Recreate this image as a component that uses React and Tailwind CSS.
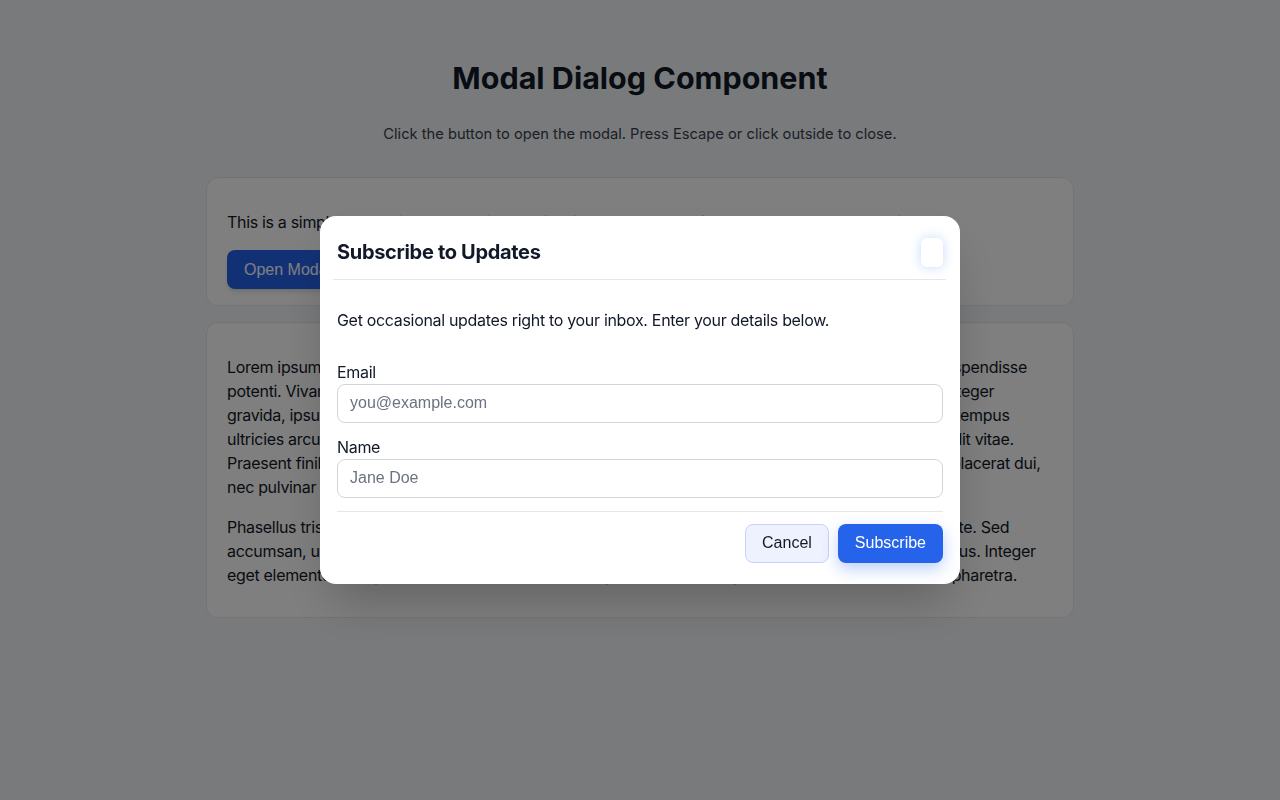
import { useState } from "react";

const font = { fontFamily: "Inter, 'Noto Sans', sans-serif" };
const controlFont = "font-['Liberation_Sans',Arial,sans-serif] tracking-normal";

function Card({ children, className = "" }) {
  return (
    <div className={`bg-white border border-gray-200 rounded-xl px-5 ${className}`}>
      {children}
    </div>
  );
}

function Field({ label, placeholder, type = "text" }) {
  return (
    <label className="block">
      <span className="block text-base leading-6 text-[#111827]">{label}</span>
      <input
        type={type}
        placeholder={placeholder}
        className={`block w-full h-[39px] rounded-lg border border-[#d4d4dc] px-3 text-base text-[#111827] placeholder:text-[#6b7280] focus:outline-none ${controlFont}`}
      />
    </label>
  );
}

function SubscribeModal({ onClose }) {
  return (
    <div className="fixed inset-0 bg-black/50 flex items-center justify-center">
      <div className="w-[640px] mb-px bg-white rounded-2xl shadow-2xl">
        {/* Header */}
        <div className="ml-[13px] mr-[14px] pl-1 pr-[3px] pt-[22px] pb-3 border-b border-gray-200 flex items-start justify-between">
          <h2 className="text-xl leading-7 font-bold text-[#111827]">Subscribe to Updates</h2>
          <button
            aria-label="Close"
            onClick={onClose}
            className="w-[22px] h-[29px] rounded-md bg-white shadow-[0_0_12px_rgba(59,130,246,0.3)]"
          />
        </div>

        {/* Body */}
        <div className="px-[17px] pt-7">
          <p className="text-base leading-6 text-[#111827]">
            Get occasional updates right to your inbox. Enter your details below.
          </p>
          <div className="mt-7 flex flex-col gap-3">
            <Field label="Email" type="email" placeholder="you@example.com" />
            <Field label="Name" placeholder="Jane Doe" />
          </div>
        </div>

        {/* Footer */}
        <div className="mx-[17px] mt-[13px] pt-3 pb-[21px] border-t border-gray-200 flex justify-end gap-[9px]">
          <button
            onClick={onClose}
            className={`h-[39px] px-4 rounded-lg bg-[#eef2ff] border border-[#c7d2fe] text-base text-[#111827] ${controlFont}`}
          >
            Cancel
          </button>
          <button className={`h-[39px] px-[17px] rounded-lg bg-[#2563eb] text-base text-white shadow-[0_6px_16px_rgba(37,99,235,0.3)] ${controlFont}`}>
            Subscribe
          </button>
        </div>
      </div>
    </div>
  );
}

export default function App() {
  const [open, setOpen] = useState(true);

  return (
    <div className="min-h-screen bg-[#f3f4f6] text-[#111827] tracking-[-0.02em]" style={font}>
      <div className="w-[868px] mx-auto pt-[60px]">
        <h1 className="text-[30.5px] leading-9 font-bold text-center tracking-normal text-[#111827]">Modal Dialog Component</h1>
        <p className="mt-7 text-[14.7px] leading-5 text-center tracking-normal text-[#374151]">
          Click the button to open the modal. Press Escape or click outside to close.
        </p>

        <div className="mt-[33px] flex flex-col gap-4">
          <Card className="pt-8 pb-4">
            <p className="text-base leading-6">
              This is a simple, accessible modal dialog built with React. It traps focus and locks page scrolling.
            </p>
            <button
              onClick={() => setOpen(true)}
              className={`mt-4 h-[39px] px-[17px] rounded-lg bg-[#2563eb] text-base text-white shadow-md ${controlFont}`}
            >
              Open Modal
            </button>
          </Card>

          <Card className="pt-8 pb-[30px] flex flex-col gap-4">
            <p className="text-base leading-6">
              Lorem ipsum dolor sit amet, consectetur adipiscing elit. Integer nec odio, sed cursus ante a diam. Suspendisse
              potenti. Vivamus lacinia vitae vestibulum vestibulum. Cras venenatis euismod dictum. Nulla facilisi. Integer
              gravida, ipsum sed pulvinar laoreet, turpis et nisl viverra lectus, non mollis nibh urna quis sem. Etiam tempus
              ultricies arcu, vitae luctus mauris consequat eu. Donec lobortis sem lectus dignissim, et facilisis blandit vitae.
              Praesent finibus lorem sit justo sodales, ut congue tellus euismod. Morbi efficitur nunc sem sit amet placerat dui,
              nec pulvinar nunc rhoncus in.
            </p>
            <p className="text-base leading-6">
              Phasellus tristique, sapien consequat dictum, lorem semper massa, sit amet vehicula est odio quis ante. Sed
              accumsan, urna aliquam feugiat, quam augue gravida sem, at porta est libero arcu. Fusce ut ante lectus. Integer
              eget elementum magna, faucibus nunc. Vivamus sagittis, lacus vel augue laoreet rutrum, faucibus a pharetra.
            </p>
          </Card>
        </div>
      </div>

      {open && <SubscribeModal onClose={() => setOpen(false)} />}
    </div>
  );
}
